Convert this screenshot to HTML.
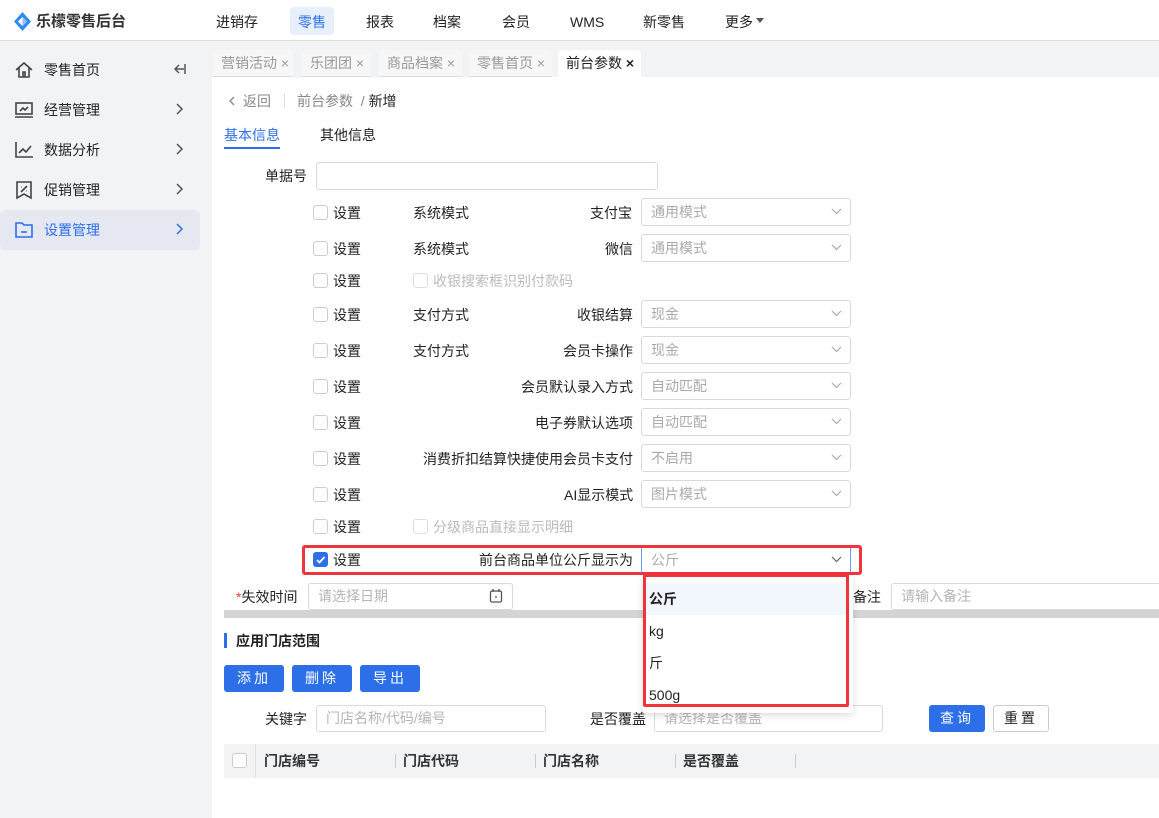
<!DOCTYPE html>
<html><head><meta charset="utf-8"><style>
*{box-sizing:border-box;margin:0;padding:0}
body{width:1159px;height:818px;overflow:hidden;position:relative;background:#fff;font-family:"Liberation Sans","Noto Sans CJK SC",sans-serif;font-size:14px;color:#222}
.a{position:absolute;white-space:nowrap}
.t{line-height:20px}
.cb{position:absolute;width:15px;height:15px;border:1px solid #c9cdd4;border-radius:3px;background:#fff}
.sel{position:absolute;width:210px;height:28px;border:1px solid #d9d9d9;border-radius:3px;color:#aaa;padding-left:9px;line-height:26px;font-size:14px}
.sel svg{position:absolute;right:8px;top:9px}
.inp{position:absolute;border:1px solid #d9d9d9;border-radius:3px;color:#b5b5b5;padding-left:9px;font-size:14px}
.btn{position:absolute;background:#2c6fe9;color:#fff;border-radius:3px;text-align:center;line-height:26px;letter-spacing:3px;height:27px}
.si{position:absolute;left:0;width:200px;height:40px}
.tab{position:absolute;top:50px;height:27px;background:#f7f7f8;border-radius:4px 4px 0 0;color:#999;line-height:26px;padding-left:8px;font-size:14px;border-bottom:1px solid #ddd}
</style></head><body>
<!-- top bar -->
<div class="a" style="left:0;top:0;width:1159px;height:41px;border-bottom:1px solid #ddd;background:#fff"></div>
<svg class="a" style="left:14px;top:12px" width="17" height="19" viewBox="0 0 17 19"><path d="M8.5 0L0 9.5 8.5 19 17 9.5Z" fill="#2f8cf0"/><path d="M8.5 5L4 9.5 8.5 14 13 9.5Z" fill="#fff"/><path d="M8.5 5L13 9.5 8.5 14Z" fill="#0e5fd8" opacity=".4"/></svg>
<div class="a t" style="left:36px;top:12px;font-size:15px;font-weight:bold;color:#333">乐檬零售后台</div>
<div class="a" style="left:290px;top:7px;width:44px;height:28px;background:#e7eefc;border-radius:4px"></div>
<div class="a t" style="left:216px;top:12px">进销存</div>
<div class="a t" style="left:298px;top:12px;color:#2c6fe9">零售</div>
<div class="a t" style="left:366px;top:12px">报表</div>
<div class="a t" style="left:433px;top:12px">档案</div>
<div class="a t" style="left:502px;top:12px">会员</div>
<div class="a t" style="left:570px;top:12px">WMS</div>
<div class="a t" style="left:643px;top:12px">新零售</div>
<div class="a t" style="left:725px;top:12px">更多</div>
<svg class="a" style="left:756px;top:18px" width="8" height="5"><path d="M0 0H8L4 5Z" fill="#555"/></svg>
<!-- sidebar -->
<div class="a" style="left:0;top:41px;width:212px;height:777px;background:#f2f3f5"></div>
<div class="si" style="top:210px;background:#e5e8f1;border-radius:6px"></div>
<svg class="a" style="left:14px;top:60px" width="20" height="20" viewBox="0 0 20 20" fill="none" stroke="#444" stroke-width="1.6"><path d="M2 10L10 3l8 7M5 8v9h10V8M9 17v-5h2v5"/></svg>
<svg class="a" style="left:14px;top:101px" width="20" height="18" viewBox="0 0 20 18" fill="none" stroke="#444" stroke-width="1.6"><rect x="2" y="2" width="16" height="11"/><path d="M1 16h18M6 10l3-3 2 2 3-3"/></svg>
<svg class="a" style="left:14px;top:141px" width="20" height="18" viewBox="0 0 20 18" fill="none" stroke="#444" stroke-width="1.6"><path d="M2 1v15h17M5 12l4-4 3 3 5-6"/></svg>
<svg class="a" style="left:14px;top:180px" width="20" height="20" viewBox="0 0 20 20" fill="none" stroke="#444" stroke-width="1.6"><path d="M3 2h14v16l-7-4-7 4Z M7 12l6-6 M7 7h.5 M12.5 11h.5"/></svg>
<svg class="a" style="left:14px;top:221px" width="20" height="18" viewBox="0 0 20 18" fill="none" stroke="#2c6fe9" stroke-width="1.6"><path d="M2 2h6l2 2h8v12H2Z M7 11h6"/></svg>
<div class="a t" style="left:44px;top:60px">零售首页</div>
<div class="a t" style="left:44px;top:100px">经营管理</div>
<div class="a t" style="left:44px;top:140px">数据分析</div>
<div class="a t" style="left:44px;top:180px">促销管理</div>
<div class="a t" style="left:44px;top:220px;color:#2c6fe9">设置管理</div>
<svg class="a" style="left:173px;top:63px" width="14" height="12" fill="none" stroke="#555" stroke-width="1.5"><path d="M12 1v10M11 6H2M6 2L2 6l4 4"/></svg>
<svg class="a" style="left:176px;top:103px" width="8" height="12" fill="none" stroke="#555" stroke-width="1.5"><path d="M1 1l5 5-5 5"/></svg>
<svg class="a" style="left:176px;top:143px" width="8" height="12" fill="none" stroke="#555" stroke-width="1.5"><path d="M1 1l5 5-5 5"/></svg>
<svg class="a" style="left:176px;top:183px" width="8" height="12" fill="none" stroke="#555" stroke-width="1.5"><path d="M1 1l5 5-5 5"/></svg>
<svg class="a" style="left:176px;top:223px" width="8" height="12" fill="none" stroke="#2c6fe9" stroke-width="1.5"><path d="M1 1l5 5-5 5"/></svg>
<!-- tab bar -->
<div class="a" style="left:212px;top:41px;width:947px;height:36px;background:#f2f3f5"></div>
<div class="tab" style="left:213px;width:80px">营销活动 ×</div>
<div class="tab" style="left:302px;width:69px">乐团团 ×</div>
<div class="tab" style="left:379px;width:83px">商品档案 ×</div>
<div class="tab" style="left:469px;width:83px">零售首页 ×</div>
<div class="tab" style="left:558px;width:83px;background:#fff;color:#222;border:none;height:28px;padding-top:0">前台参数 <b>×</b></div>
<!-- breadcrumb -->
<svg class="a" style="left:228px;top:96px" width="7" height="10" fill="none" stroke="#888" stroke-width="1.3"><path d="M6 1L2 5l4 4"/></svg>
<div class="a t" style="left:243px;top:91px;color:#888">返回</div>
<div class="a" style="left:284px;top:94px;width:1px;height:14px;background:#ddd"></div>
<div class="a t" style="left:297px;top:91px;color:#888">前台参数 &nbsp;/ <span style="color:#222">新增</span></div>
<div class="a t" style="left:224px;top:125px;color:#2c6fe9">基本信息</div>
<div class="a" style="left:224px;top:147px;width:56px;height:2px;background:#2c6fe9"></div>
<div class="a t" style="left:320px;top:125px">其他信息</div>
<div class="a t" style="left:265px;top:166px">单据号</div>
<div class="inp" style="left:316px;top:162px;width:342px;height:28px"></div>
<!-- rows -->
<div class="cb" style="left:313px;top:205px"></div><div class="a t" style="left:333px;top:203px">设置</div><div class="a t" style="left:413px;top:203px">系统模式</div><div class="a t" style="left:590px;top:203px">支付宝</div><div class="sel" style="left:641px;top:198px">通用模式<svg width="11" height="7" fill="none" stroke="#aaa" stroke-width="1.2"><path d="M1 1l4.5 4.5L10 1"/></svg></div>
<div class="cb" style="left:313px;top:241px"></div><div class="a t" style="left:333px;top:239px">设置</div><div class="a t" style="left:413px;top:239px">系统模式</div><div class="a t" style="left:605px;top:239px">微信</div><div class="sel" style="left:641px;top:234px">通用模式<svg width="11" height="7" fill="none" stroke="#aaa" stroke-width="1.2"><path d="M1 1l4.5 4.5L10 1"/></svg></div>
<div class="cb" style="left:313px;top:273px"></div><div class="a t" style="left:333px;top:271px">设置</div><div class="cb" style="left:413px;top:273px;border-color:#ddd"></div><div class="a t" style="left:433px;top:271px;color:#bbb">收银搜索框识别付款码</div>
<div class="cb" style="left:313px;top:307px"></div><div class="a t" style="left:333px;top:305px">设置</div><div class="a t" style="left:413px;top:305px">支付方式</div><div class="a t" style="left:577px;top:305px">收银结算</div><div class="sel" style="left:641px;top:300px">现金<svg width="11" height="7" fill="none" stroke="#aaa" stroke-width="1.2"><path d="M1 1l4.5 4.5L10 1"/></svg></div>
<div class="cb" style="left:313px;top:343px"></div><div class="a t" style="left:333px;top:341px">设置</div><div class="a t" style="left:413px;top:341px">支付方式</div><div class="a t" style="left:563px;top:341px">会员卡操作</div><div class="sel" style="left:641px;top:336px">现金<svg width="11" height="7" fill="none" stroke="#aaa" stroke-width="1.2"><path d="M1 1l4.5 4.5L10 1"/></svg></div>
<div class="cb" style="left:313px;top:379px"></div><div class="a t" style="left:333px;top:377px">设置</div><div class="a t" style="left:521px;top:377px">会员默认录入方式</div><div class="sel" style="left:641px;top:372px">自动匹配<svg width="11" height="7" fill="none" stroke="#aaa" stroke-width="1.2"><path d="M1 1l4.5 4.5L10 1"/></svg></div>
<div class="cb" style="left:313px;top:415px"></div><div class="a t" style="left:333px;top:413px">设置</div><div class="a t" style="left:535px;top:413px">电子券默认选项</div><div class="sel" style="left:641px;top:408px">自动匹配<svg width="11" height="7" fill="none" stroke="#aaa" stroke-width="1.2"><path d="M1 1l4.5 4.5L10 1"/></svg></div>
<div class="cb" style="left:313px;top:451px"></div><div class="a t" style="left:333px;top:449px">设置</div><div class="a t" style="left:423px;top:449px">消费折扣结算快捷使用会员卡支付</div><div class="sel" style="left:641px;top:444px">不启用<svg width="11" height="7" fill="none" stroke="#aaa" stroke-width="1.2"><path d="M1 1l4.5 4.5L10 1"/></svg></div>
<div class="cb" style="left:313px;top:487px"></div><div class="a t" style="left:333px;top:485px">设置</div><div class="a t" style="left:564px;top:485px">AI显示模式</div><div class="sel" style="left:641px;top:480px">图片模式<svg width="11" height="7" fill="none" stroke="#aaa" stroke-width="1.2"><path d="M1 1l4.5 4.5L10 1"/></svg></div>
<div class="cb" style="left:313px;top:519px"></div><div class="a t" style="left:333px;top:517px">设置</div><div class="cb" style="left:413px;top:519px;border-color:#ddd"></div><div class="a t" style="left:433px;top:517px;color:#bbb">分级商品直接显示明细</div>
<!-- highlighted row -->
<div class="cb" style="left:313px;top:552px;background:#2c6fe9;border-color:#2c6fe9"><svg width="13" height="13" style="position:absolute;left:0;top:0" fill="none" stroke="#fff" stroke-width="1.8"><path d="M3 7l2.5 2.5L10.5 4"/></svg></div>
<div class="a t" style="left:333px;top:550px">设置</div><div class="a t" style="left:479px;top:550px">前台商品单位公斤显示为</div>
<div class="sel" style="left:641px;top:546px;border-color:#6d9cf0">公斤<svg width="11" height="7" fill="none" stroke="#666" stroke-width="1.2"><path d="M1 1l4.5 4.5L10 1"/></svg></div>
<div class="a" style="left:302px;top:545px;width:560px;height:30px;border:3px solid #f0343c;border-radius:3px"></div>
<!-- 失效时间 -->
<div class="a t" style="left:236px;top:587px"><span style="color:#f0343c">*</span>失效时间</div>
<div class="inp" style="left:308px;top:583px;width:205px;height:27px;line-height:25px">请选择日期</div>
<svg class="a" style="left:489px;top:588px" width="14" height="15" fill="none" stroke="#555" stroke-width="1.3"><rect x="1.5" y="3" width="11" height="11" rx="1.5"/><path d="M4 1v3M10 1v3M6 9h2"/></svg>
<div class="a t" style="left:853px;top:587px">备注</div>
<div class="inp" style="left:891px;top:583px;width:270px;height:27px;line-height:25px">请输入备注</div>
<div class="a" style="left:224px;top:610px;width:935px;height:8px;background:#d4d4d4"></div>
<!-- store scope -->
<div class="a" style="left:224px;top:633px;width:3px;height:15px;background:#2c6fe9"></div>
<div class="a t" style="left:236px;top:631px;font-weight:bold">应用门店范围</div>
<div class="btn" style="left:224px;top:665px;width:60px">添加</div>
<div class="btn" style="left:292px;top:665px;width:60px">删除</div>
<div class="btn" style="left:360px;top:665px;width:60px">导出</div>
<div class="a t" style="left:265px;top:709px">关键字</div>
<div class="inp" style="left:316px;top:705px;width:230px;height:27px;line-height:25px">门店名称/代码/编号</div>
<div class="a t" style="left:590px;top:709px">是否覆盖</div>
<div class="inp" style="left:654px;top:705px;width:229px;height:27px;line-height:25px">请选择是否覆盖</div>
<div class="btn" style="left:929px;top:705px;width:56px;height:27px">查询</div>
<div class="a" style="left:993px;top:705px;width:56px;height:27px;border:1px solid #ccc;border-radius:3px;text-align:center;line-height:25px;letter-spacing:3px">重置</div>
<div class="a" style="left:224px;top:744px;width:935px;height:34px;background:#f2f3f5"></div>
<div class="cb" style="left:232px;top:753px;border-color:#ccc"></div>
<div class="a" style="left:255px;top:744px;width:1px;height:34px;background:#e0e0e0"></div>
<div class="a t" style="left:264px;top:751px;font-weight:bold;color:#333">门店编号</div>
<div class="a" style="left:395px;top:754px;width:1px;height:14px;background:#ccc"></div>
<div class="a t" style="left:403px;top:751px;font-weight:bold;color:#333">门店代码</div>
<div class="a" style="left:535px;top:754px;width:1px;height:14px;background:#ccc"></div>
<div class="a t" style="left:543px;top:751px;font-weight:bold;color:#333">门店名称</div>
<div class="a" style="left:675px;top:754px;width:1px;height:14px;background:#ccc"></div>
<div class="a t" style="left:683px;top:751px;font-weight:bold;color:#333">是否覆盖</div>
<div class="a" style="left:795px;top:754px;width:1px;height:14px;background:#ccc"></div>
<!-- dropdown -->
<div class="a" style="left:643px;top:576px;width:210px;height:137px;background:#fff;box-shadow:0 2px 8px rgba(0,0,0,.15);border-radius:3px"></div>
<div class="a" style="left:645px;top:583px;width:203px;height:32px;background:#f2f6fd"></div>
<div class="a t" style="left:649px;top:589px;font-weight:bold">公斤</div>
<div class="a t" style="left:649px;top:621px">kg</div>
<div class="a t" style="left:649px;top:653px">斤</div>
<div class="a t" style="left:649px;top:685px">500g</div>
<div class="a" style="left:643px;top:574px;width:206px;height:133px;border:3px solid #f0343c;border-radius:2px"></div>
</body></html>
